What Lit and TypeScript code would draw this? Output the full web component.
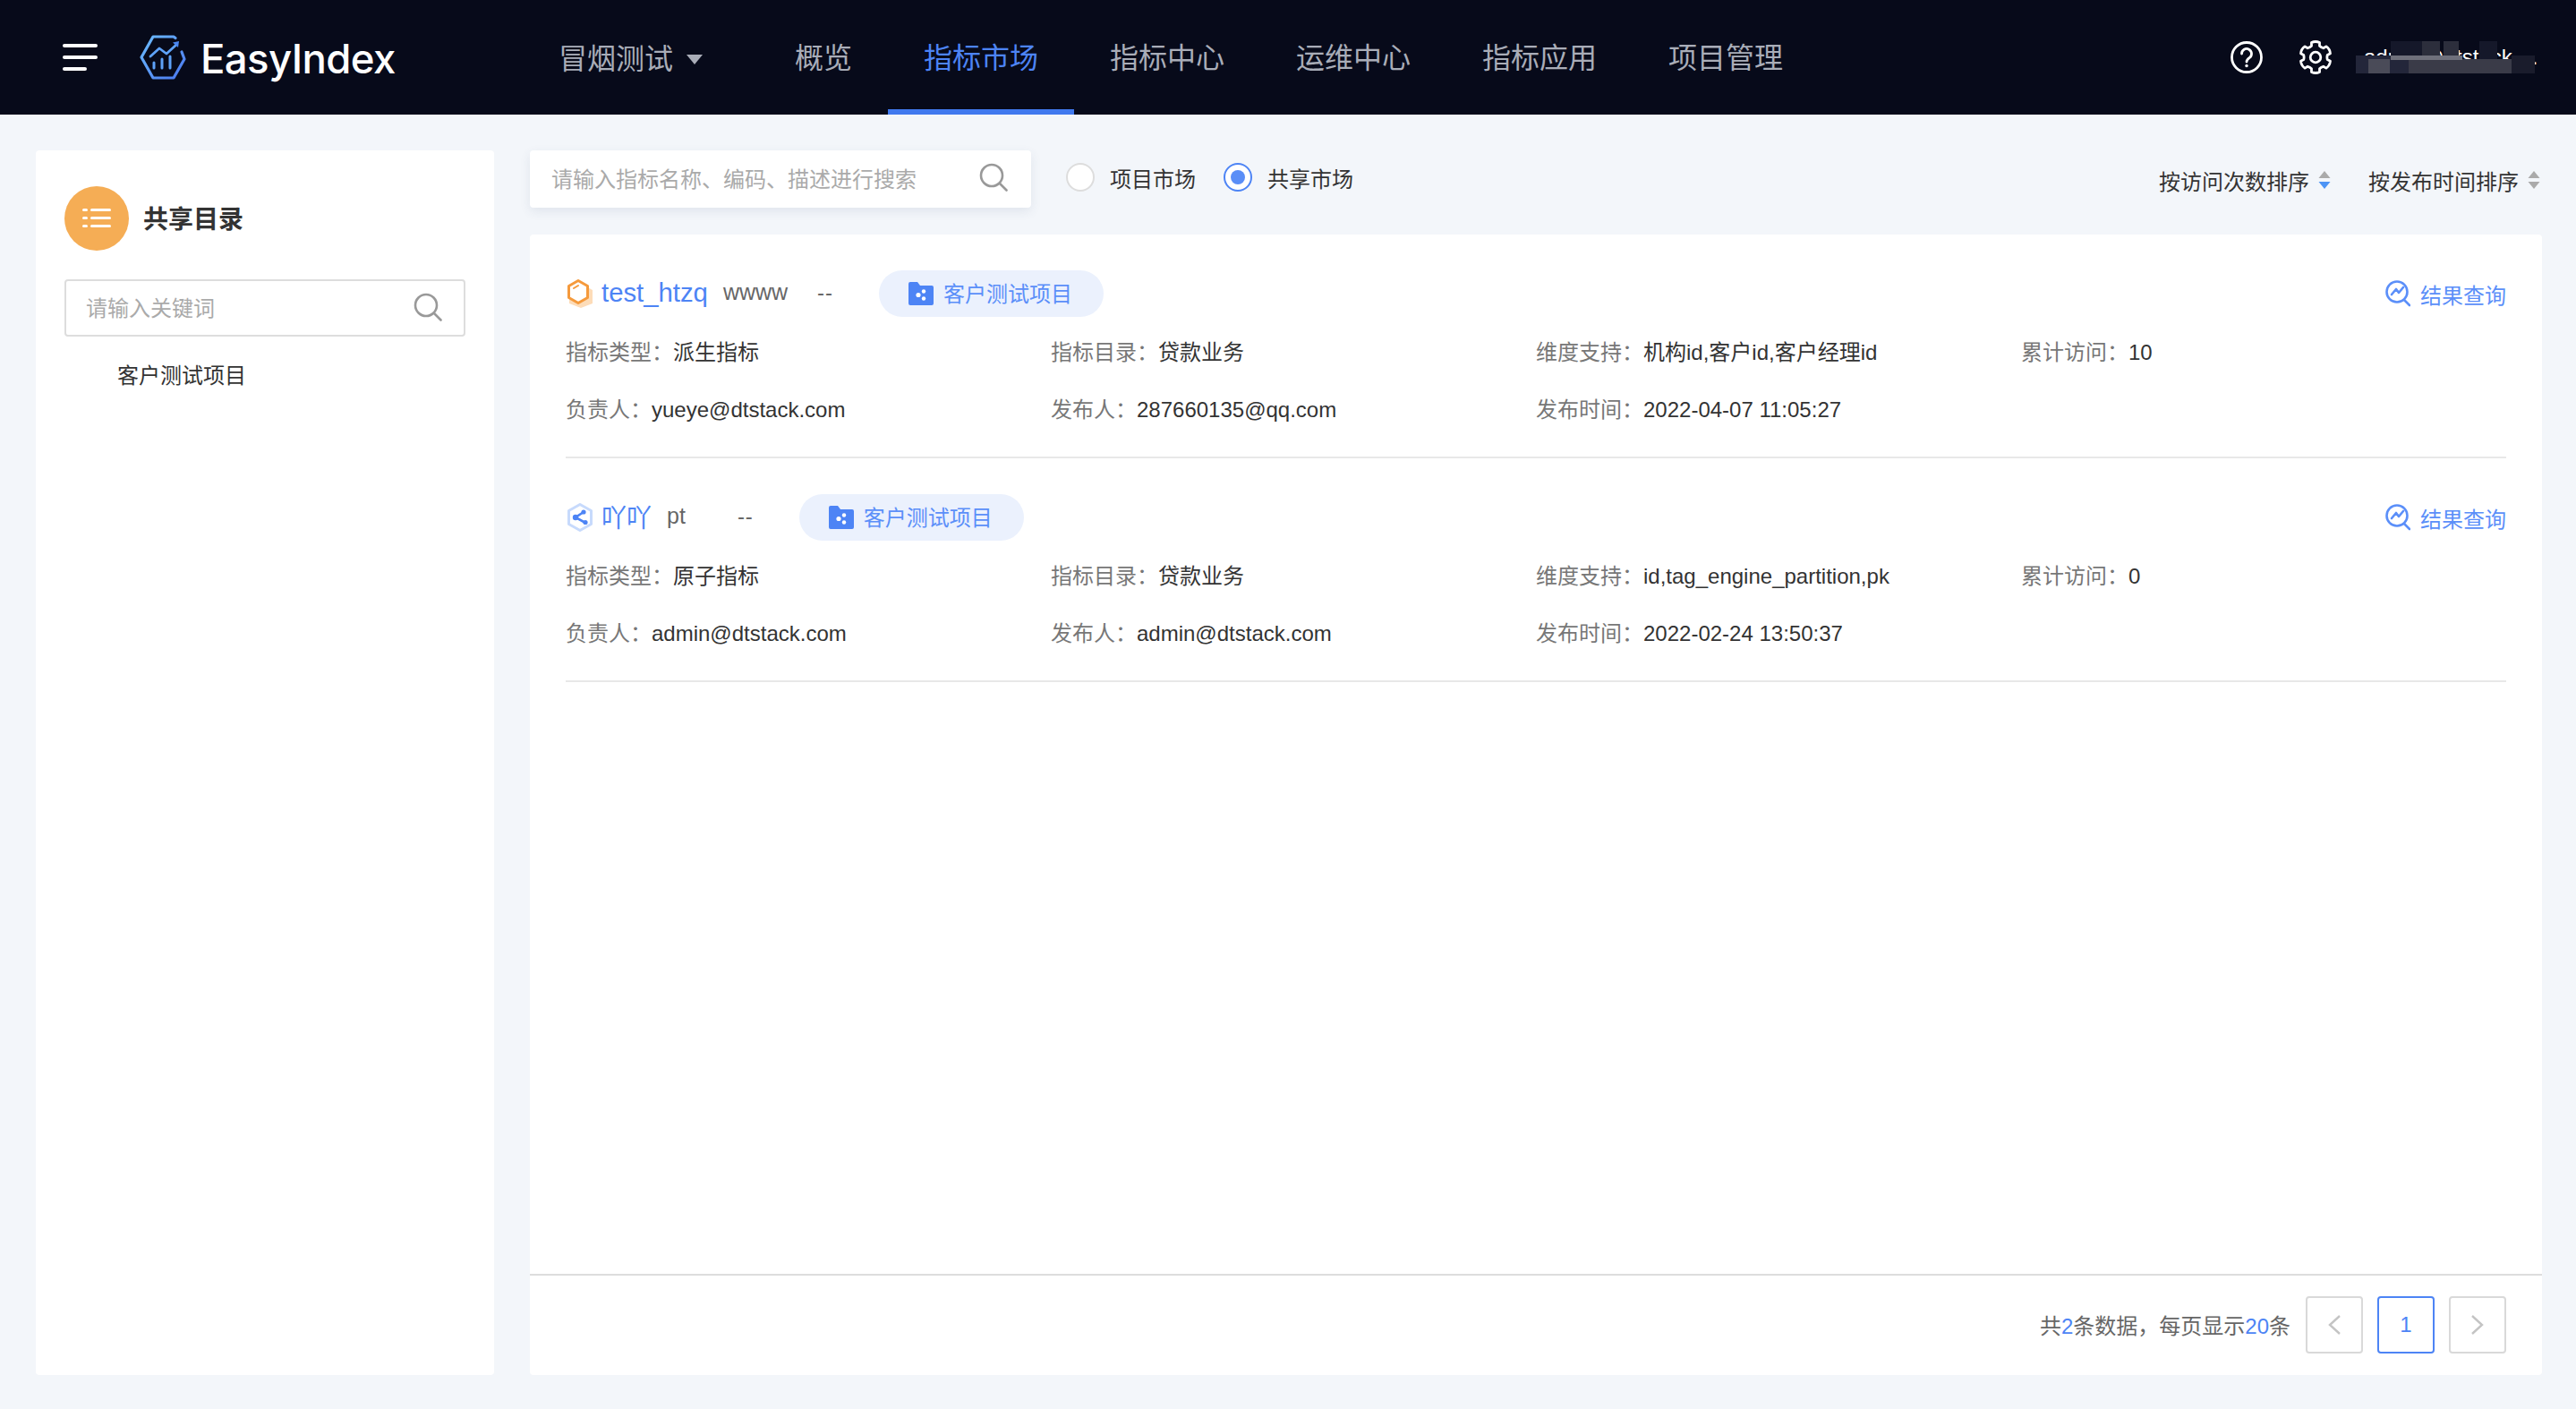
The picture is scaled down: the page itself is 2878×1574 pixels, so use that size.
import { LitElement, html, css } from "lit";
import { customElement } from "lit/decorators.js";

const searchIcon = (cls: string) => html`<svg class=${cls} viewBox="0 0 32 32" fill="none" stroke="#999" stroke-width="2.6" stroke-linecap="round"><circle cx="14" cy="14" r="12"/><path d="M23 23l7.5 7.5"/></svg>`;

const folderIcon = html`<svg class="folder" viewBox="0 0 28 26"><path d="M0 2a2 2 0 0 1 2-2h8l3 4h13a2 2 0 0 1 2 2v18a2 2 0 0 1-2 2H2a2 2 0 0 1-2-2z" fill="#4d84f5"/><circle cx="11" cy="14.5" r="2.6" fill="#fff"/><circle cx="17" cy="10.5" r="2.2" fill="#fff"/><circle cx="17" cy="18.5" r="2.2" fill="#fff"/></svg>`;

const resultIcon = html`<svg class="result-icon" viewBox="0 0 28 30" fill="none" stroke="#5b8ff9" stroke-width="2.6" stroke-linecap="round" stroke-linejoin="round"><circle cx="13" cy="13" r="11.5"/><path d="M7 16l5-6 3 4 5-6"/><path d="M21 22l6 6"/></svg>`;

const orangeHex = html`<svg class="hex" viewBox="0 0 28 32"><path d="M15 5l13 7v15l-13 5-13-5V12z" fill="#fddcb8"/><path d="M12 1.5l10.5 6v13l-10.5 6-10.5-6v-13z" fill="#fff" stroke="#f59a3c" stroke-width="3" stroke-linejoin="round"/><path d="M7 10l5-3" stroke="#f59a3c" stroke-width="2" stroke-linecap="round"/></svg>`;

const blueHex = html`<svg class="hex" viewBox="0 0 28 32"><path d="M14 1.5l12.5 7v15l-12.5 7-12.5-7v-15z" fill="#fff" stroke="#c7dafc" stroke-width="3" stroke-linejoin="round"/><path d="M18 10l-9 6 11 6" fill="none" stroke="#4d84f5" stroke-width="2.6"/><circle cx="9" cy="16" r="3.2" fill="#4d84f5"/><circle cx="18" cy="10" r="2.6" fill="#4d84f5"/><circle cx="20" cy="21.5" r="2.6" fill="#4d84f5"/></svg>`;

const logo = html`<svg class="logo" viewBox="0 0 52 50" fill="none"><defs><linearGradient id="lg" x1="0" y1="0" x2="1" y2="1"><stop offset="0" stop-color="#6cbcff"/><stop offset="1" stop-color="#4a78ee"/></linearGradient></defs><path d="M40 3.5L38 2H15L2 25l13 23h23l12-21-3-8" stroke="url(#lg)" stroke-width="3.2" stroke-linecap="round" stroke-linejoin="round"/><path d="M12 24l10-9 8 6 11-10" stroke="#5ea2f8" stroke-width="2.8" stroke-linecap="round" stroke-linejoin="round"/><path d="M37 8.5l7-1.500-1 7z" fill="#4a86f2"/><path d="M16 31v6M25 27v10M34 24v13" stroke="#5ea2f8" stroke-width="3" stroke-linecap="round"/></svg>`;

function gearPath(): string {
  const cx = 18, cy = 19, pts: string[] = [];
  for (let i = 0; i < 6; i++) {
    const a = (-90 + i * 60) * Math.PI / 180;
    const w = 0.27, wr = 0.34;
    const p = (r: number, t: number) => `${(cx + r * Math.cos(t)).toFixed(2)} ${(cy + r * Math.sin(t)).toFixed(2)}`;
    pts.push(`${i === 0 ? "M" : "L"}${p(13.5, a - wr)}`, `L${p(17, a - w)}`, `Q${p(18.6, a)} ${p(17, a + w)}`, `L${p(13.5, a + wr)}`);
    pts.push(`Q${p(12.5, a + Math.PI / 6)} ${p(13.5, a + Math.PI / 3 - wr)}`);
  }
  return pts.join(" ") + "Z";
}

const caret = (active: boolean) => html`<svg class="caret" viewBox="0 0 14 20"><path d="M7 0l6.500 8H.5z" fill="#aaa"/><path d="M7 20L.5 12h13z" fill=${active ? "#4d94f5" : "#aaa"}/></svg>`;

interface Field { label: string; value: string }
interface Item {
  icon: unknown;
  name: string;
  nameClass: string;
  desc: string;
  gapClass: string;
  fields: Field[];
}

const items: Item[] = [
  {
    icon: orangeHex, name: "test_htzq", nameClass: "name-latin", desc: "wwww", gapClass: "desc-wide",
    fields: [
      { label: "指标类型：", value: "派生指标" },
      { label: "指标目录：", value: "贷款业务" },
      { label: "维度支持：", value: "机构id,客户id,客户经理id" },
      { label: "累计访问：", value: "10" },
      { label: "负责人：", value: "yueye@dtstack.com" },
      { label: "发布人：", value: "287660135@qq.com" },
      { label: "发布时间：", value: "2022-04-07 11:05:27" },
    ],
  },
  {
    icon: blueHex, name: "吖吖", nameClass: "name-cjk", desc: "pt", gapClass: "desc-narrow",
    fields: [
      { label: "指标类型：", value: "原子指标" },
      { label: "指标目录：", value: "贷款业务" },
      { label: "维度支持：", value: "id,tag_engine_partition,pk" },
      { label: "累计访问：", value: "0" },
      { label: "负责人：", value: "admin@dtstack.com" },
      { label: "发布人：", value: "admin@dtstack.com" },
      { label: "发布时间：", value: "2022-02-24 13:50:37" },
    ],
  },
];

const navItems = ["概览", "指标市场", "指标中心", "运维中心", "指标应用", "项目管理"];

// mosaic that hides the user name: [x, y, w, h, colour], relative to the name box
const mosaic: [number, number, number, number, string][] = [
  [0, 16, 39, 20, "#23263a"],
  [14, 20, 24, 16, "#4a4b58"],
  [39, 0, 20, 16, "#15182a"],
  [59, 0, 16, 16, "#15182a"],
  [59, 20, 115, 16, "#3a3b48"],
  [39, 20, 20, 16, "#23263a"],
  [39, 16, 80, 5, "#6f707b"],
  [74, 0, 20, 16, "#2c2e3c"],
  [98, 0, 17, 16, "#2c2e3c"],
  [138, 0, 20, 20, "#15182a"],
  [174, 16, 26, 20, "#1a1c2c"],
];

@customElement("app-root")
export class AppRoot extends LitElement {
  static styles = css`
    :host {
      display: flex;
      flex-direction: column;
      height: 1574px;
      background: #f3f6fa;
      font-family: "Liberation Sans", "Noto Sans CJK SC", sans-serif;
      font-size: 24px;
      color: #333;
    }
    .header {
      flex: none;
      height: 128px;
      background: #070a1a;
      display: flex;
      align-items: center;
      padding-left: 70px;
      padding-right: 36px;
      color: #a9adb8;
      font-size: 32px;
    }
    .burger { width: 40px; height: 30px; flex: none; margin-right: 46px; }
    .logo { width: 52px; height: 50px; flex: none; margin-right: 16px; }
    .brand {
      font-family: Inter, sans-serif;
      font-size: 45.5px;
      font-weight: 500;
      color: #fff;
      width: 400px;
      flex: none;
      letter-spacing: -0.6px;
      padding-top: 3px;
    }
    .project { display: flex; align-items: center; gap: 15px; flex: none; margin-right: 63px; padding-bottom: 2px; }
    .project svg { width: 18px; height: 11px; margin-top: 6px; }
    .nav { display: flex; height: 128px; flex: none; }
    .nav-item {
      padding: 0 40px;
      display: flex;
      align-items: center;
      box-sizing: border-box;
      border-bottom: 6px solid transparent;
      padding-top: 2px;
    }
    .nav-item.active { color: #4d84f5; border-bottom-color: #4079ee; }
    .tools { margin-left: auto; display: flex; align-items: center; }
    .tools svg { width: 36px; height: 38px; flex: none; }
    .gear { margin-left: 41px; }
    .user {
      position: relative;
      width: 210px;
      height: 36px;
      margin-left: 27px;
      color: #fff;
      font-size: 24px;
      line-height: 36px;
      padding-left: 9px;
      box-sizing: border-box;
      white-space: nowrap;
    }
    .user .dot { margin-left: 22px; }
    .mosaic { position: absolute; }

    .body { flex: 1; display: flex; gap: 40px; padding: 40px 38px 38px 40px; min-height: 0; }
    .side {
      flex: none;
      width: 512px;
      box-sizing: border-box;
      background: #fff;
      border-radius: 4px;
      padding: 40px 32px;
    }
    .side-head { display: flex; align-items: center; gap: 16px; }
    .side-badge {
      width: 72px; height: 72px; border-radius: 50%;
      background: #f5ad55;
      display: flex; align-items: center; justify-content: center;
    }
    .side-badge svg { width: 32px; height: 22px; }
    .side-title { font-size: 28px; font-weight: 700; color: #333; padding-bottom: 3px; }
    .side-input {
      margin-top: 32px;
      height: 64px;
      box-sizing: border-box;
      border: 2px solid #ddd;
      border-radius: 4px;
      display: flex;
      align-items: center;
      justify-content: space-between;
      padding: 0 24px 3px 22px;
      color: #aaa;
    }
    .icon-s { width: 32px; height: 32px; flex: none; }
    .tree-node { margin: 26px 0 0 59px; line-height: 36px; color: #333; }

    .main { flex: 1; display: flex; flex-direction: column; min-width: 0; }
    .toolbar { flex: none; height: 64px; display: flex; align-items: center; margin-bottom: 30px; }
    .search {
      width: 560px; height: 64px;
      box-sizing: border-box;
      background: #fff;
      border-radius: 4px;
      box-shadow: 0 4px 12px rgba(60, 80, 120, 0.10);
      display: flex;
      align-items: center;
      justify-content: space-between;
      padding: 0 26px 4px 24px;
      color: #aaa;
      margin-right: 39px;
      flex: none;
    }
    .radio { display: flex; align-items: center; gap: 17px; margin: 0 31px 4px 0; color: #333; }
    .radio i {
      width: 32px; height: 32px; box-sizing: border-box;
      border: 2px solid #ddd;
      border-radius: 50%;
      background: #fff;
      display: flex; align-items: center; justify-content: center;
    }
    .radio.on i { border-color: #4d84f5; }
    .radio.on i::after { content: ""; width: 16px; height: 16px; border-radius: 50%; background: #5a8ef7; }
    .sorts { margin-left: auto; display: flex; gap: 42px; padding: 2px 2px 0 0; color: #333; }
    .sort { display: flex; align-items: center; gap: 10px; }
    .caret { width: 14px; height: 20px; flex: none; }

    .card {
      flex: 1;
      background: #fff;
      border-radius: 4px;
      display: flex;
      flex-direction: column;
      min-height: 0;
    }
    .list { flex: 1; padding: 0 40px; min-height: 0; }
    .item { height: 250px; box-sizing: border-box; padding-top: 40px; border-bottom: 2px solid #e8e8e8; }
    .title { display: flex; align-items: center; height: 52px; }
    .title > span { padding-bottom: 3px; }
    .hex { width: 28px; height: 32px; flex: none; margin: 0 10px 0 2px; }
    .name { color: #4d84f5; margin-right: 17px; }
    .name-latin { font-size: 29.3px; }
    .name-cjk { font-size: 28px; }
    .desc { color: #666; font-size: 25px; }
    .desc-wide { margin-right: 33px; }
    .desc-narrow { margin-right: 58px; }
    .dash { color: #666; margin-right: 51px; letter-spacing: 1px; }
    .pill {
      height: 52px; box-sizing: border-box;
      padding: 0 35px 0 33px;
      border-radius: 26px;
      background: #ebf1fd;
      color: #5b8ff9;
      display: flex; align-items: center; gap: 11px;
    }
    .pill span { padding-bottom: 4px; }
    .folder { width: 28px; height: 26px; flex: none; }
    .action { margin-left: auto; display: flex; align-items: center; gap: 11px; color: #5b8ff9; }
    .result-icon { width: 28px; height: 30px; flex: none; }
    .fields { margin-top: 8px; display: grid; grid-template-columns: repeat(4, 1fr); grid-auto-rows: 64px; align-items: center; }
    .field { display: flex; align-items: baseline; white-space: nowrap; line-height: 36px; }
    .field .k { color: #777; }
    .field .v { color: #333; }

    .footer {
      flex: none;
      height: 113px;
      box-sizing: border-box;
      border-top: 2px solid #ddd;
      padding: 23px 40px 0 0;
      display: flex;
      align-items: flex-start;
      justify-content: flex-end;
      gap: 16px;
    }
    .total { color: #666; line-height: 68px; margin-right: 1px; }
    .total b { font-weight: 400; color: #4d84f5; }
    .page {
      width: 64px; height: 64px; box-sizing: border-box;
      border: 2px solid #d9d9d9;
      border-radius: 4px;
      display: flex; align-items: center; justify-content: center;
      color: #4d84f5;
    }
    .page.cur { border-color: #4d84f5; }
    .page svg { width: 14px; height: 24px; }
  `;

  render() {
    return html`
      <div class="header">
        <svg class="burger" viewBox="0 0 40 30"><g fill="#fff"><rect y="0" width="39" height="4" rx="2"/><rect y="13" width="39" height="4" rx="2"/><rect y="26" width="27" height="4" rx="2"/></g></svg>
        ${logo}
        <div class="brand">EasyIndex</div>
        <div class="project">冒烟测试<svg viewBox="0 0 18 11"><path d="M0 0h18L9 11z" fill="#a9adb8"/></svg></div>
        <div class="nav">
          ${navItems.map((n) => html`<div class="nav-item ${n === "指标市场" ? "active" : ""}">${n}</div>`)}
        </div>
        <div class="tools">
          <svg viewBox="0 0 36 38" fill="none" stroke="#fff" stroke-width="2.800"><circle cx="18" cy="19" r="16.500"/><path d="M12.500 15a5.500 5.500 0 1 1 8.500 4.600c-2 1.400-3 2.300-3 4.400" stroke-linecap="round"/><circle cx="18" cy="28.500" r="1.700" fill="#fff" stroke="none"/></svg>
          <svg class="gear" viewBox="0 0 36 38" fill="none" stroke="#fff" stroke-width="2.800" stroke-linejoin="round"><path d=${gearPath()}/><circle cx="18" cy="19" r="5.800"/></svg>
          <div class="user">admin@dtstack<span class="dot">.</span>
            ${mosaic.map(([x, y, w, h, c]) => html`<span class="mosaic" style="left:${x}px;top:${y}px;width:${w}px;height:${h}px;background:${c}"></span>`)}
          </div>
        </div>
      </div>
      <div class="body">
        <div class="side">
          <div class="side-head">
            <div class="side-badge"><svg viewBox="0 0 32 22" fill="#fff"><rect x="0" y="0" width="6" height="3" rx="1.500"/><rect x="9" y="0" width="23" height="3" rx="1.500"/><rect x="0" y="9" width="6" height="3" rx="1.500"/><rect x="9" y="9" width="23" height="3" rx="1.500"/><rect x="0" y="18" width="6" height="3" rx="1.500"/><rect x="9" y="18" width="23" height="3" rx="1.500"/></svg></div>
            <div class="side-title">共享目录</div>
          </div>
          <div class="side-input"><span>请输入关键词</span>${searchIcon("icon-s")}</div>
          <div class="tree-node">客户测试项目</div>
        </div>
        <div class="main">
          <div class="toolbar">
            <div class="search"><span>请输入指标名称、编码、描述进行搜索</span>${searchIcon("icon-s")}</div>
            <div class="radio"><i></i>项目市场</div>
            <div class="radio on"><i></i>共享市场</div>
            <div class="sorts">
              <div class="sort">按访问次数排序${caret(true)}</div>
              <div class="sort">按发布时间排序${caret(false)}</div>
            </div>
          </div>
          <div class="card">
            <div class="list">
              ${items.map((it) => html`
                <div class="item">
                  <div class="title">
                    ${it.icon}
                    <span class="name ${it.nameClass}">${it.name}</span>
                    <span class="desc ${it.gapClass}">${it.desc}</span>
                    <span class="dash">--</span>
                    <div class="pill">${folderIcon}<span>客户测试项目</span></div>
                    <div class="action">${resultIcon}结果查询</div>
                  </div>
                  <div class="fields">
                    ${it.fields.map((f) => html`<div class="field"><span class="k">${f.label}</span><span class="v">${f.value}</span></div>`)}
                  </div>
                </div>`)}
            </div>
            <div class="footer">
              <div class="total">共<b>2</b>条数据，每页显示<b>20</b>条</div>
              <div class="page"><svg viewBox="0 0 14 24" fill="none" stroke="#c4c4c4" stroke-width="2.400"><path d="M13 2L2 12l11 10"/></svg></div>
              <div class="page cur">1</div>
              <div class="page"><svg viewBox="0 0 14 24" fill="none" stroke="#c4c4c4" stroke-width="2.400"><path d="M1 2l11 10L1 22"/></svg></div>
            </div>
          </div>
        </div>
      </div>
    `;
  }
}
